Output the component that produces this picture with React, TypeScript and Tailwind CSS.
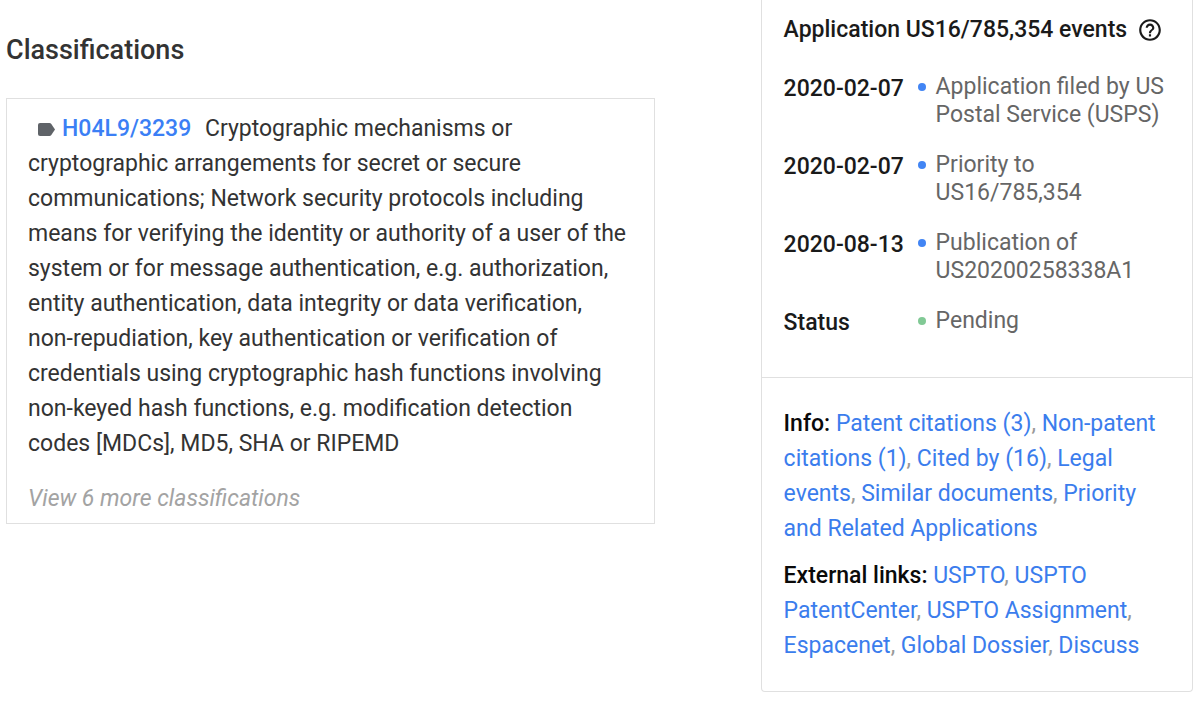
import React from "react";

const events = [
  { date: "2020-02-07", text: "Application filed by US Postal Service (USPS)", dot: "bg-[#4285f4]" },
  { date: "2020-02-07", text: "Priority to US16/785,354", dot: "bg-[#4285f4]" },
  { date: "2020-08-13", text: "Publication of US20200258338A1", dot: "bg-[#4285f4]" },
  { date: "Status", text: "Pending", dot: "bg-[#81c995]" },
];

const info = [
  "Patent citations (3)",
  "Non-patent citations (1)",
  "Cited by (16)",
  "Legal events",
  "Similar documents",
  "Priority and Related Applications",
];

const external = ["USPTO", "USPTO PatentCenter", "USPTO Assignment", "Espacenet", "Global Dossier", "Discuss"];

function LinkList({ label, links }: { label: string; links: string[] }) {
  return (
    <p className="text-[#9a9a9a]">
      <span className="font-medium text-[#0a0a0a]">{label}</span>{" "}
      {links.map((link, i) => (
        <React.Fragment key={link}>
          <a href="#" className="text-[#3b7ded]">{link}</a>
          {i < links.length - 1 && ", "}
        </React.Fragment>
      ))}
    </p>
  );
}

export default function App() {
  return (
    <div className="grid grid-cols-[3fr_2fr] items-start gap-[106px] bg-white pr-[7px] pl-1.5 font-[Roboto,sans-serif] text-[23px] text-[#333333]">
      <main className="pt-8">
        <h2 className="text-[27px] leading-9 font-medium text-[#333333]">Classifications</h2>
        <section className="mt-[30px] border border-[#e0e0e0] px-[21px] pt-3 pb-2">
          <p className="leading-[35px]">
            <svg viewBox="0 0 17 13" className="mr-[7px] ml-2.5 inline-block h-[13px] w-[17px] align-baseline" aria-hidden="true">
              <path d="M2 0H11.5Q12.6 0 13.3 1L17 6.5L13.3 12Q12.6 13 11.5 13H2Q0 13 0 11V2Q0 0 2 0Z" fill="#5f6368" />
            </svg>
            <a href="#" className="mr-2 font-medium text-[#3b7ff5]">H04L9/3239</a>{" "}
            Cryptographic mechanisms or cryptographic arrangements for secret or secure communications; Network
            security protocols including means for verifying the identity or authority of a user of the system or for
            message authentication, e.g. authorization, entity authentication, data integrity or data verification,
            non-repudiation, key authentication or verification of credentials using cryptographic hash functions
            involving non-keyed hash functions, e.g. modification detection codes [MDCs], MD5, SHA or RIPEMD
          </p>
          <button type="button" className="mt-[22px] block leading-8 text-[#a3a3a3] italic">View 6 more classifications</button>
        </section>
      </main>
      <aside className="rounded-b-sm border border-t-0 border-[#e0e0e0]">
        <section className="px-[22px] pt-3 pb-10">
          <h3 className="flex items-center gap-2.5 leading-9 font-medium text-[#1a1a1a]">
            Application US16/785,354 events
            <button type="button" aria-label="Help">
              <svg viewBox="0 0 24 24" className="size-[26px]" fill="#1a1a1a" aria-hidden="true">
                <path d="M11 18h2v-2h-2v2zm1-16C6.48 2 2 6.48 2 12s4.48 10 10 10 10-4.48 10-10S17.52 2 12 2zm0 18c-4.41 0-8-3.59-8-8s3.59-8 8-8 8 3.59 8 8-3.59 8-8 8zm0-14c-2.21 0-4 1.79-4 4h2c0-1.1.9-2 2-2s2 .9 2 2c0 2-3 1.75-3 5h2c0-2.25 3-2.5 3-5 0-2.21-1.79-4-4-4z" />
              </svg>
            </button>
          </h3>
          <ul className="mt-[25px] flex flex-col gap-[22px]">
            {events.map((event, i) => (
              <li key={i} className="flex leading-7">
                <span className="w-[134px] shrink-0 pt-0.5 font-medium text-[#1a1a1a]">{event.date}</span>
                <span className={`mt-2.5 mr-2.5 size-2 shrink-0 rounded-full ${event.dot}`} />
                <span className="text-[#666666]">{event.text}</span>
              </li>
            ))}
          </ul>
        </section>
        <section className="flex flex-col gap-3 border-t border-[#e0e0e0] px-[22px] py-7 leading-[35px]">
          <LinkList label="Info:" links={info} />
          <LinkList label="External links:" links={external} />
        </section>
      </aside>
    </div>
  );
}
